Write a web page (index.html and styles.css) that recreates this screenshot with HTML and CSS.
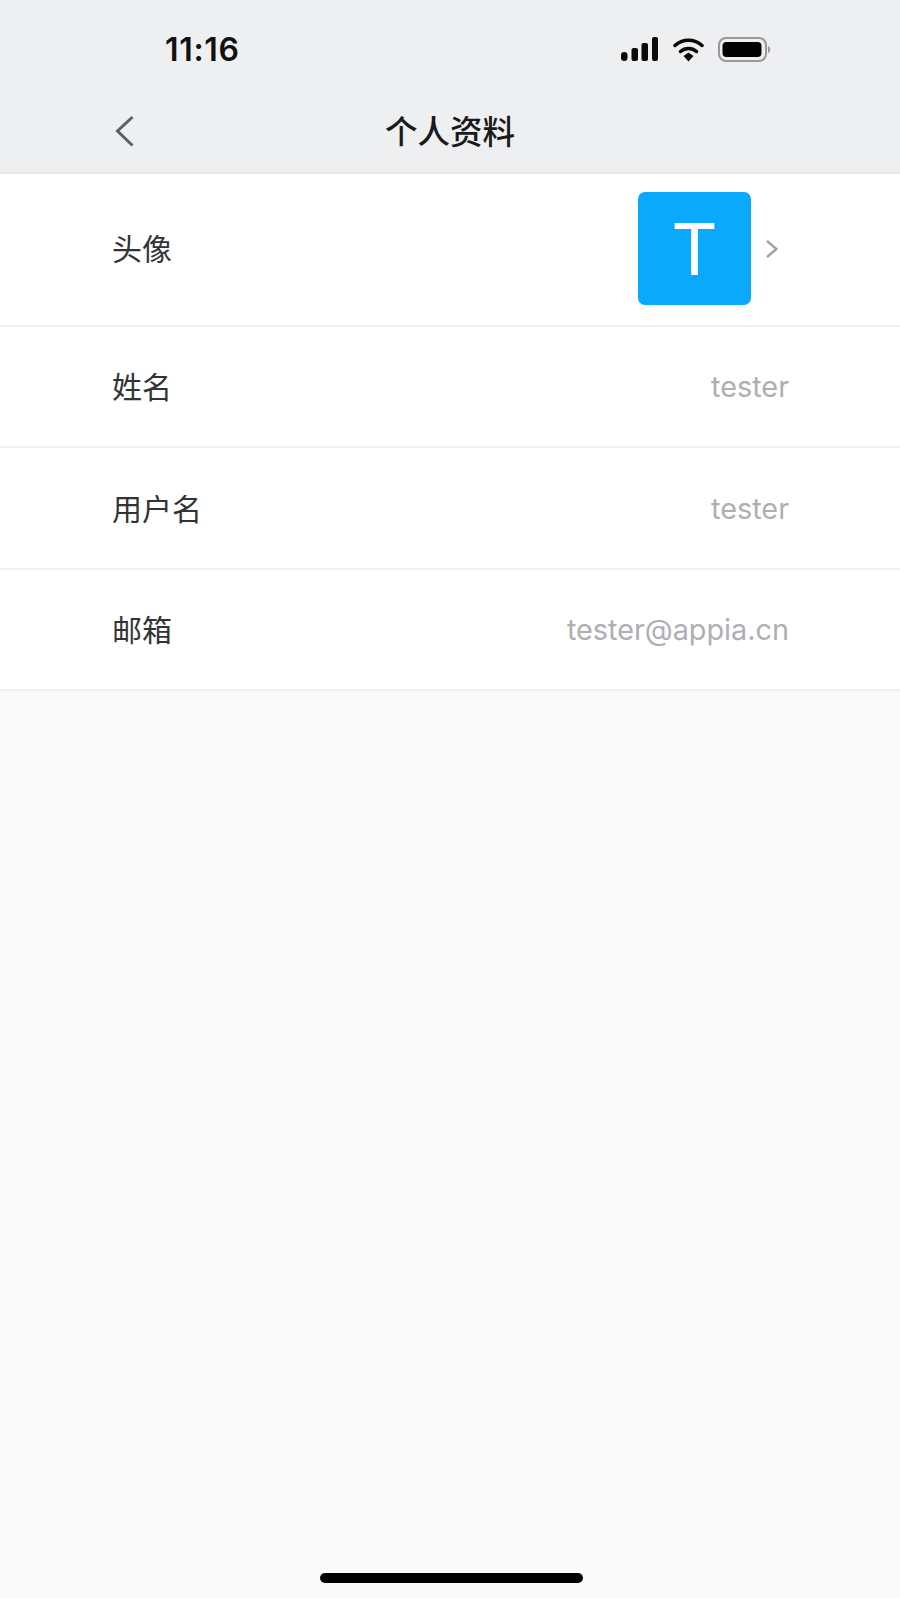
FILE: index.html
```html
<!DOCTYPE html>
<html lang="zh-CN">
<head>
<meta charset="utf-8">
<title>个人资料</title>
<link rel="stylesheet" href="styles.css">
</head>
<body>
<div class="screen">
  <header class="top">
    <div class="status">
      <span class="time">11:16</span>
      <div class="status-icons">
        <svg class="signal" width="39" height="25" viewBox="0 0 39 25"><rect x="1" y="15" width="6.500" height="9" rx="3.250" fill="#0a0a0a"/><rect x="11.500" y="11" width="6.500" height="13" rx="2" fill="#0a0a0a"/><rect x="21.500" y="6" width="6.500" height="18" rx="2" fill="#0a0a0a"/><rect x="32" y="0" width="6" height="24" rx="2" fill="#0a0a0a"/></svg>
        <svg class="wifi" width="31" height="25" viewBox="0 0 31 25"><path d="M2 8.500C9.500 1.500 21.500 1.500 29 8.500" fill="none" stroke="#0a0a0a" stroke-width="3.500" stroke-linecap="round"/><path d="M7.500 14.500C12 10.500 19 10.500 23.500 14.500" fill="none" stroke="#0a0a0a" stroke-width="3.500" stroke-linecap="round"/><path d="M10.500 19L15.500 15.500L20.500 19L15.500 24.500Z" fill="#0a0a0a"/></svg>
        <svg class="battery" width="53" height="25" viewBox="0 0 53 25"><rect x="1" y="1" width="47" height="23" rx="7" fill="none" stroke="#98989b" stroke-width="2"/><rect x="4.500" y="5" width="39" height="15" rx="4" fill="#000"/><path d="M50 9C53 10 53 15 50 16Z" fill="#98989b"/></svg>
      </div>
    </div>
    <div class="nav">
      <svg class="back" width="20" height="32" viewBox="0 0 20 32"><path d="M18.500 2L3.500 16L18.500 30.500" fill="none" stroke="#5f6063" stroke-width="3"/></svg>
      <h1 class="title">个人资料</h1>
    </div>
  </header>
  <main class="list">
    <div class="row row-avatar">
      <span class="label">头像</span>
      <div class="avatar-wrap">
        <div class="avatar">T</div>
        <svg class="chevron" width="13" height="20" viewBox="0 0 13 20"><path d="M2 2L11.500 10L2 18" fill="none" stroke="#a3a3a6" stroke-width="2.500"/></svg>
      </div>
    </div>
    <div class="row row-a"><span class="label">姓名</span><span class="value">tester</span></div>
    <div class="row row-b"><span class="label">用户名</span><span class="value">tester</span></div>
    <div class="row row-a"><span class="label">邮箱</span><span class="value">tester@appia.cn</span></div>
  </main>
  <div class="home-bar"></div>
</div>
</body>
</html>
```

FILE: styles.css
```css
* { box-sizing: border-box; }
html, body { margin: 0; padding: 0; }
body { font-family: "Inter", "Noto Sans CJK SC", sans-serif; background: #fafafb; }
.screen { width: 900px; height: 1598px; display: flex; flex-direction: column; background: #fafafb; position: relative; overflow: hidden; }
.top { height: 174px; background: #eeeff1; border-bottom: 2px solid #e7e8ea; flex: none; }
.status { height: 98px; display: flex; justify-content: space-between; align-items: center; padding: 0 129px 0 165px; }
.time { font-size: 32px; font-weight: 600; color: #111; letter-spacing: 0.7px; }
.status-icons { display: flex; align-items: center; gap: 14px; }
.nav { height: 66px; padding-bottom: 2px; display: flex; align-items: center; justify-content: center; position: relative; }
.back { position: absolute; left: 114px; top: 17px; }
.title { margin: 0; font-size: 32.500px; font-weight: 500; color: #1a1a1a; line-height: 1; font-family: "Noto Sans CJK SC", sans-serif; }
.list { background: #fff; flex: none; }
.row { display: flex; align-items: center; justify-content: space-between; padding: 0 111px 0 112px; border-bottom: 2px solid #f0f1f2; }
.row-avatar { height: 153px; padding-right: 122px; padding-bottom: 2px; }
.row-a { height: 121px; }
.row-b { height: 122px; }
.label { font-size: 30px; color: #333335; font-family: "Noto Sans CJK SC", sans-serif; padding-bottom: 3px; }
.value { font-size: 28.800px; color: #aeaeb4; }
.avatar-wrap { display: flex; align-items: center; gap: 14px; }
.avatar { width: 113px; height: 113px; border-radius: 7px; background: #0aa9fb; color: #fff; font-size: 72px; display: flex; align-items: center; justify-content: center; font-family: "Inter", sans-serif; font-weight: 400; }
.home-bar { position: absolute; left: 320px; top: 1573px; width: 263px; height: 10px; border-radius: 5px; background: #000; }
```
